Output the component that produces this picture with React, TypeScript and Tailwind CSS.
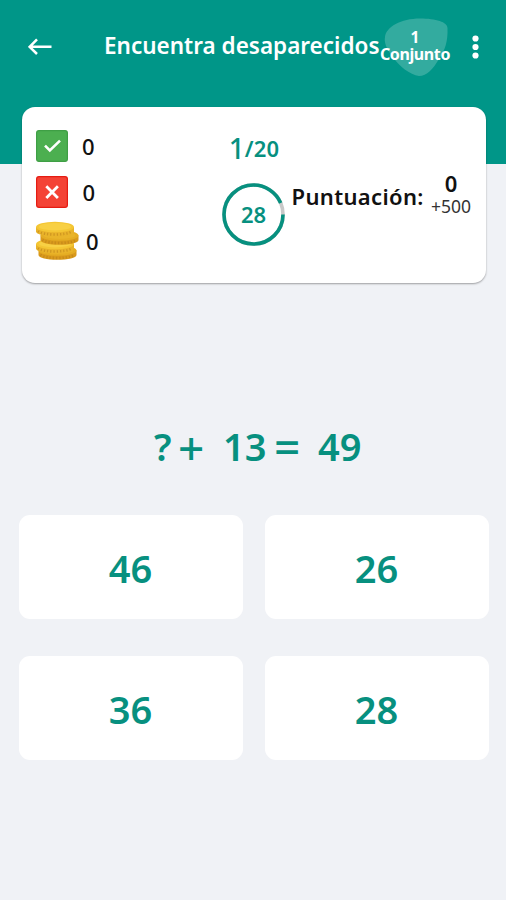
import type { ReactNode } from "react";

function Square({ kind }: { kind: "right" | "wrong" }) {
  const right = kind === "right";
  return (
    <svg width="32" height="32" viewBox="0 0 32 32" className="shrink-0">
      <rect x="0.6" y="0.6" width="30.8" height="30.8" rx="2.4" fill={right ? "#4caf50" : "#f44336"} stroke={right ? "#3f9f45" : "#e51c13"} strokeWidth="1.2" />
      {right ? (
        <path d="M9 15.600l4.800 4.800L24 10.600" fill="none" stroke="#fff" strokeWidth="2.600" />
      ) : (
        <path d="M10.300 10.300l11.600 11.600M21.900 10.300L10.300 21.900" fill="none" stroke="#fff" strokeWidth="2.800" />
      )}
    </svg>
  );
}

function Coin({ x, y, dark }: { x: number; y: number; dark?: boolean }) {
  return (
    <g transform={`translate(${x} ${y})`}>
      <path d="M0 5.500v4.500c0 3 8.500 4.800 19 4.800s19-1.800 19-4.800v-4.500z" fill={dark ? "#d99a1c" : "#e9b32a"} />
      <path d="M2 9.800c3 2.200 10 3.200 17 3.200s14-1 17-3.200" fill="none" stroke="#b57a18" strokeOpacity="0.500" strokeWidth="2.600" strokeDasharray="1.200 2" />
      <ellipse cx="19" cy="5.500" rx="19" ry="5.300" fill={dark ? "#e5ad24" : "#f4c634"} />
      <ellipse cx="19" cy="5.200" rx="16" ry="3.700" fill={dark ? "#e9b42a" : "#f8d044"} />
    </g>
  );
}

function Coins() {
  return (
    <svg width="43" height="40" viewBox="0 0 43 40" className="shrink-0">
      <Coin x={2.5} y={24} dark />
      <Coin x={0} y={17.5} />
      <Coin x={4.5} y={9} dark />
      <Coin x={0} y={0.5} />
    </svg>
  );
}

function Answer({ children }: { children: ReactNode }) {
  return (
    <button className="flex h-[104px] items-center justify-center rounded-[11px] bg-white pt-0.5 text-[38px] font-semibold leading-none text-[#07907f]">
      {children}
    </button>
  );
}

export default function App() {
  return (
    <main className="h-[900px] w-[506px] overflow-hidden bg-[#f0f2f6] font-['Noto_Sans','Open_Sans',sans-serif]">
      <header className="flex h-[164px] items-start bg-[#009688] text-white">
        <svg width="24" height="17" viewBox="0 0 24 17" className="ml-7 mt-[38px] shrink-0">
          <path d="M23.500 8.800H2.500M9 1.300L1.700 8.800L9 16" fill="none" stroke="currentColor" strokeWidth="2.500" />
        </svg>
        <h1 className="ml-[52px] mt-[31px] w-[275px] whitespace-nowrap text-[22.5px] font-semibold leading-[30px]">
          Encuentra desaparecidos
        </h1>
        <div className="relative mt-[18px] flex h-[58px] w-[72px] shrink-0 flex-col items-center">
          <svg width="64" height="58" viewBox="0 0 64 58" className="absolute left-[4.500px] top-0">
            <path d="M1 19C2 9 17 0.500 36 0.500C52 0.500 63.500 4 63.500 10C64 24 61 32 55 41C49 51 43 58 35 58C26 57 15 48 8 38C2 30 0 24 1 19Z" fill="#fff" fillOpacity="0.2" />
          </svg>
          <span className="relative mt-2.5 text-[15.5px] font-bold leading-[18px]">1</span>
          <span className="relative text-[16px] font-bold leading-[17px] tracking-[-0.4px]">Conjunto</span>
        </div>
        <svg width="8" height="24" viewBox="0 0 8 24" className="ml-[20px] mt-[35px] shrink-0" fill="currentColor">
          <circle cx="4.500" cy="3.500" r="3.100" />
          <circle cx="4.500" cy="12" r="3.100" />
          <circle cx="4.500" cy="20.500" r="3.100" />
        </svg>
      </header>

      <section className="ml-[22px] -mt-[57px] relative flex h-[176px] w-[464px] rounded-[13px] bg-white text-[22px] font-semibold leading-none text-[#111] shadow-[0_1px_2px_rgba(0,0,0,0.35)]">
        <div className="flex w-[200px] flex-col pl-3.5 pt-[23px] font-medium">
          <div className="flex h-8 items-center gap-[14px]"><Square kind="right" /><span>0</span></div>
          <div className="mt-3.5 flex h-8 items-center gap-[14.5px]"><Square kind="wrong" /><span>0</span></div>
          <div className="mt-[13px] flex h-10 items-center gap-[7px]"><Coins /><span>0</span></div>
        </div>
        <div className="flex w-[63px] flex-col items-center text-[#07907f]">
          <div className="mt-[26px] flex h-[30px] items-start whitespace-nowrap pl-px">
            <span className="text-[28px] font-medium leading-[30px]">1</span>
            <span className="text-[22px] leading-[31px] tracking-[0.2px]">/20</span>
          </div>
          <div className="relative mt-5 flex size-[63px] items-center justify-center pb-0.5">
            <svg width="63" height="63" viewBox="0 0 63 63" className="absolute inset-0" fill="none" strokeWidth="3.600">
              <circle cx="31.500" cy="31.500" r="29.500" stroke="#c8c8c8" />
              <circle cx="31.500" cy="31.500" r="29.500" stroke="#07907f" pathLength="360" strokeDasharray="337 23" />
            </svg>
            <span className="relative">28</span>
          </div>
        </div>
        <div className="ml-[6.5px] flex pt-[64px]">
          <span className="mt-3.5 w-[137px] whitespace-nowrap leading-[22px] tracking-[0.35px]">Puntuación:</span>
          <div className="flex w-[45px] flex-col items-center">
            <span className="leading-[24px]">0</span>
            <span className="text-[17.5px] font-normal leading-[23px] text-[#333]">+500</span>
          </div>
        </div>
      </section>

      <div className="mt-[138px] flex h-[50px] pl-[154px] text-[38px] font-semibold leading-[50px] text-[#07907f]">
        <span className="w-[24px]">?</span>
        <span className="w-[45px] pt-px text-[46px] font-medium">+</span>
        <span className="w-[51px]">13</span>
        <span className="w-[44px] text-[46px] font-medium">=</span>
        <span>49</span>
      </div>

      <div className="ml-[18.5px] mt-[44px] grid w-[470px] grid-cols-[224px_224px] gap-x-[22px] gap-y-[37px]">
        <Answer>46</Answer>
        <Answer>26</Answer>
        <Answer>36</Answer>
        <Answer>28</Answer>
      </div>
    </main>
  );
}
